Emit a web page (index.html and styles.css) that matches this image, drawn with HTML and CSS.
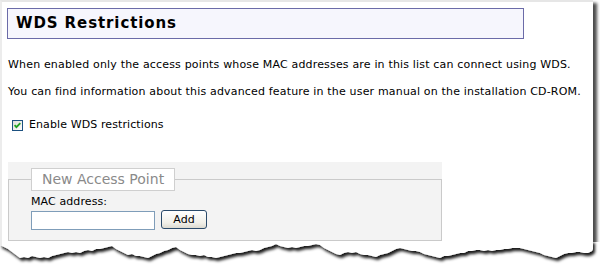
FILE: index.html
```html
<!DOCTYPE html>
<html lang="en">
<head>
  <meta charset="UTF-8">
  <title>WDS Restrictions</title>
  <link rel="stylesheet" href="styles.css">
</head>
<body>

<div class="shot">
  <div class="paper">
    <h1 class="title">WDS Restrictions</h1>

    <p class="info">When enabled only the access points whose MAC addresses are in this list can connect using WDS.</p>
    <p class="info">You can find information about this advanced feature in the user manual on the installation CD-ROM.</p>

    <label class="option">
      <svg class="check" width="11" height="11" viewBox="0 0 11 11">
        <defs>
          <linearGradient id="boxFill" x1="0" y1="0" x2="1" y2="1">
            <stop offset="0" stop-color="#dcdcd5"/>
            <stop offset="1" stop-color="#ffffff"/>
          </linearGradient>
        </defs>
        <rect x="0.5" y="0.5" width="10" height="10" fill="url(#boxFill)" stroke="#1c5180"/>
        <path d="M2.6 5.2 L4.4 7.2 L8.3 3.1" fill="none" stroke="#21a121" stroke-width="1.8"/>
      </svg>
      Enable WDS restrictions
    </label>

    <div class="panel">
      <fieldset class="new-ap">
        <legend>New Access Point</legend>
        <div class="field-label">MAC address:</div>
        <div class="field-row">
          <input type="text" class="mac-input">
          <button type="button" class="btn-add">Add</button>
        </div>
      </fieldset>
    </div>
  </div>

  <!-- torn bottom edge of the screenshot -->
  <svg class="tear" width="600" height="30" viewBox="0 2 600 30">
    <defs>
      <filter id="tearShadow" x="-5%" y="-50%" width="110%" height="200%">
        <feDropShadow dx="2" dy="3" stdDeviation="1.5" flood-color="#000" flood-opacity="0.9"/>
      </filter>
    </defs>
    <rect x="0" y="2" width="600" height="30" fill="#fff"/>
    <polygon filter="url(#tearShadow)" fill="#fff" points="0,0 0,5 4,7 8,9 12,12 16,15 20,18 24,17 28,18 32,16 36,17 40,18 44,17 48,18 52,16 56,15 60,14 64,13 68,12 72,13 76,12 80,13 84,11 88,10 92,11 96,9 100,9 104,8 108,7 112,6 116,9 120,11 124,13 128,15 132,14 136,16 140,16 144,17 148,18 152,16 156,14 160,13 164,11 168,10 172,8 176,7 180,10 184,12 188,14 192,15 196,15 200,16 204,15 208,17 212,17 216,18 220,17 224,16 228,15 232,14 236,13 240,13 244,12 248,11 252,10 256,11 260,10 264,8 268,7 272,6 276,4 280,6 284,7 288,8 292,7 296,8 300,7 304,6 308,6 312,5 316,4 320,5 324,8 328,10 332,12 336,14 340,15 344,13 348,12 352,13 356,12 360,14 364,15 368,15 372,16 376,17 380,15 384,14 388,13 392,11 396,9 400,8 404,9 408,10 412,11 416,11 420,12 424,14 428,15 432,16 436,17 440,18 444,16 448,16 452,15 456,14 460,13 464,13 468,11 472,11 476,10 480,10 484,11 488,10 492,11 496,10 500,10 504,9 508,9 512,8 516,8 520,8 524,9 528,10 532,11 536,12 540,13 544,15 548,16 552,17 556,18 560,16 564,14 568,13 572,13 576,12 580,12 584,13 588,13 592,11 593,9 593,0"/>
    <rect x="0" y="0" width="2" height="6" fill="#ececec"/>
  </svg>
</div>

</body>
</html>
```

FILE: styles.css
```css
body {
  margin: 0;
  background: #fff;
  font-family: "DejaVu Sans", Verdana, sans-serif;
  font-size: 11px;
  line-height: 14px;
  color: #000;
}

.shot {
  width: 600px;
  height: 272px;
  overflow: hidden;
  background: #fff;
}

.paper {
  box-sizing: border-box;
  width: 593px;
  height: 242px;
  padding: 6px 0 0 6px;
  border-top: 2px solid #e6e6e6;
  border-left: 2px solid #ececec;
  background: #fff;
  box-shadow: 4px 3px 3px rgba(0, 0, 0, 0.7);
}

.title {
  box-sizing: border-box;
  width: 517px;
  height: 31px;
  margin: 0 0 19px -1px;
  padding-left: 8px;
  border: 1px solid #6b6ba8;
  background: #f6f6fd;
  font-size: 15px;
  font-weight: bold;
  line-height: 29px;
  letter-spacing: 0.9px;
}

.info {
  margin: 0 0 13px;
  letter-spacing: 0.17px;
}

.option {
  display: flex;
  align-items: center;
  gap: 6px;
  margin-top: 19px;
  padding-left: 4px;
  letter-spacing: 0.1px;
}

.check {
  display: block;
  flex: none;
}

.panel {
  width: 434px;
  margin: 30px 0 0;
  padding-top: 6px;
  background: #f3f3f3;
}

.new-ap {
  margin: 0;
  padding: 4px 22px 10px;
  border: 1px solid #cacaca;
}

.new-ap legend {
  padding: 0 10px;
  border: 1px solid #cfcfcf;
  background: #fff;
  color: #8a8a8a;
  font-size: 14px;
  line-height: 21px;
}

.field-label {
  letter-spacing: 0.1px;
}

.field-row {
  display: flex;
  gap: 6px;
  margin-top: 2px;
}

.mac-input {
  box-sizing: border-box;
  width: 124px;
  height: 19px;
  margin: 0;
  border: 1px solid #7f9db9;
  background: #fff;
}

.btn-add {
  box-sizing: border-box;
  width: 46px;
  height: 19px;
  margin: -1px 0 0;
  padding: 0;
  border: 1px solid #2a4a6a;
  border-radius: 3px;
  background: linear-gradient(#ffffff, #f0efe8 70%, #dcdad0);
  font-family: "DejaVu Sans", Verdana, sans-serif;
  font-size: 11px;
  color: #000;
}
```
